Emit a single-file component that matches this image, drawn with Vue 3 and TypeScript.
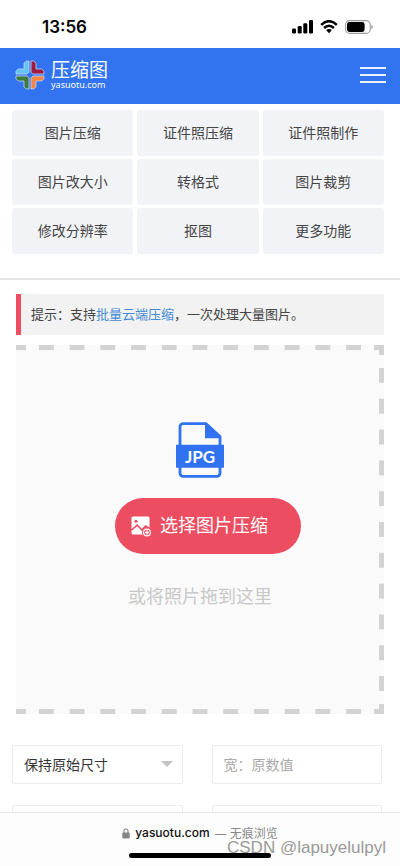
<script setup lang="ts">
import { ref } from 'vue'

const tools: string[] = [
  '图片压缩', '证件照压缩', '证件照制作',
  '图片改大小', '转格式', '图片裁剪',
  '修改分辨率', '抠图', '更多功能',
]
const size = ref('保持原始尺寸')
const width = ref('')
const format = ref('')
const height = ref('')
const picker = ref<HTMLInputElement | null>(null)
</script>

<template>
  <div class="app">
    <div class="status">
      <span class="time">13:56</span>
      <div class="indicators">
        <svg width="21" height="14" viewBox="0 0 21 14" aria-hidden="true">
          <rect x="0" y="8.5" width="4" height="5" rx="1.2" />
          <rect x="5.7" y="6" width="4" height="7.5" rx="1.2" />
          <rect x="11.3" y="3.2" width="4" height="10.3" rx="1.2" />
          <rect x="17" y="0" width="4" height="13.5" rx="1.2" />
        </svg>
        <svg width="18" height="14" viewBox="0 0 18 14" aria-hidden="true">
          <path d="M1.2 4.9Q9-2.5 16.8 4.9M4.1 8Q9 3.6 13.9 8" fill="none" stroke="#000" stroke-width="2.5" />
          <path d="M6.1 10.1Q9 7.8 11.9 10.1L9 13.2Z" />
        </svg>
        <svg width="28" height="14" viewBox="0 0 28 14" aria-hidden="true">
          <rect x=".6" y=".6" width="24.6" height="12.8" rx="4" fill="none" stroke="#9b9b9b" stroke-width="1.1" />
          <rect x="2" y="2" width="17.6" height="10" rx="2.4" />
          <path d="M26.3 4.7q1.6.7 1.6 2.3t-1.6 2.3z" fill="#9b9b9b" />
        </svg>
      </div>
    </div>

    <header class="header">
      <a class="brand" href="#">
        <svg width="30" height="30" viewBox="0 0 30 30" aria-hidden="true">
          <g stroke="#c3d6f8" stroke-width=".8" stroke-linejoin="round">
            <path d="M9 3.2L11.200 1H14v11.200L12.200 14H1v-2.800L3.200 9H9z" fill="#62c4f6" />
            <path d="M21 3.200L18.800 1H16v11.200l1.800 1.800H29v-2.800L26.800 9H21z" fill="#9e1c43" />
            <path d="M9 26.800L11.200 29H14V17.800L12.200 16H1v2.800L3.200 21H9z" fill="#3e793d" />
            <path d="M21 26.800L18.800 29H16V17.800l1.800-1.800H29v2.800L26.800 21H21z" fill="#f58443" />
          </g>
        </svg>
        <span class="names">
          <span class="title">压缩图</span>
          <span class="domain">yasuotu.com</span>
        </span>
      </a>
      <button class="menu" type="button" aria-label="菜单">
        <i></i><i></i><i></i>
      </button>
    </header>

    <main class="content">
      <nav class="tools">
        <a v-for="tool in tools" :key="tool" href="#">{{ tool }}</a>
      </nav>

      <section class="work">
        <p class="tip">提示：支持<a href="#">批量云端压缩</a>，一次处理大量图片。</p>

        <div class="drop">
          <div class="frame" aria-hidden="true">
            <i class="dash top"></i>
            <i class="dash right"></i>
            <i class="dash bottom"></i>
            <i class="corner start-top"></i>
            <i class="corner start-bottom"></i>
            <i class="corner end-top"></i>
            <i class="corner end-bottom"></i>
          </div>
          <svg class="file" width="50" height="56" viewBox="0 0 50 56" role="img" aria-label="JPG">
            <path d="M31 1.6H8.2a3.2 3.2 0 0 0-3.2 3.2v46.4a3.2 3.2 0 0 0 3.2 3.2h33.6a3.2 3.2 0 0 0 3.2-3.2V14.5z" fill="#fafafa" stroke="#3072ef" stroke-width="2.8" />
            <path d="M30 1l15.6 15.2H30z" fill="#3072ef" />
            <path d="M1 22.8h48v23H1z" fill="#3072ef" />
            <text x="25" y="40.5" text-anchor="middle" fill="#fff">JPG</text>
          </svg>
          <input ref="picker" type="file" accept="image/*" aria-label="选择图片" hidden />
          <button class="choose" type="button" @click="picker?.click()">
            <svg width="20" height="21" viewBox="0 0 20 21" aria-hidden="true">
              <path d="M2 .5h15a1.500 1.500 0 0 1 1.500 1.500v15a1.500 1.500 0 0 1-1.500 1.500H2A1.500 1.500 0 0 1 .5 17V2A1.500 1.500 0 0 1 2 .5z" fill="#fff" />
              <circle cx="5" cy="5.200" r="1.500" fill="#ec4d60" />
              <path d="M0 14.500l6.200-5.300 4.800 4.800 3.500-4 4.800 3" fill="none" stroke="#ec4d60" stroke-width="1.600" />
              <circle cx="16" cy="16.500" r="5" fill="#ec4d60" />
              <circle cx="16" cy="16.500" r="3.400" fill="none" stroke="#fff" stroke-width="1.200" />
              <path d="M16 14.500v4M14 16.500h4" stroke="#fff" stroke-width="1.400" />
            </svg>
            <span>选择图片压缩</span>
          </button>
          <p class="hint">或将照片拖到这里</p>
        </div>
      </section>

      <form class="fields" @submit.prevent>
        <div class="select">
          <select v-model="size" aria-label="尺寸">
            <option>保持原始尺寸</option>
          </select>
        </div>
        <input v-model="width" type="text" aria-label="宽" placeholder="宽：原数值" />
        <input v-model="format" type="text" aria-label="格式" />
        <input v-model="height" type="text" aria-label="高" />
      </form>
    </main>

    <footer class="browser">
      <div class="address">
        <svg width="8" height="11" viewBox="0 0 8 11" aria-hidden="true">
          <rect x=".3" y="4.500" width="7.400" height="6" rx="1" fill="#858585" />
          <path d="M2 5V3a2 2 0 0 1 4 0v2" fill="none" stroke="#858585" stroke-width="1.100" />
        </svg>
        <span class="host">yasuotu.com</span>
        <span class="mode">— 无痕浏览</span>
      </div>
      <div class="home"></div>
      <span class="mark">CSDN @lapuyelulpyl</span>
    </footer>
  </div>
</template>

<style>
body {
  margin: 0;
  background: #fff;
}
</style>

<style scoped>
* {
  box-sizing: border-box;
}
.app {
  display: flex;
  flex-direction: column;
  height: 100vh;
  color: #444;
  font-family: "Noto Sans", "Noto Sans CJK SC", sans-serif;
  font-size: 14px;
}
a {
  color: inherit;
  text-decoration: none;
}
button {
  border: 0;
  font: inherit;
  cursor: pointer;
}
.status {
  display: flex;
  flex: none;
  align-items: center;
  justify-content: space-between;
  height: 48px;
  padding: 5px 27px 0 42px;
}
.time {
  color: #000;
  font: 600 17px/20px Inter, sans-serif;
}
.indicators {
  display: flex;
  gap: 7px;
}
.header {
  display: flex;
  flex: none;
  align-items: center;
  justify-content: space-between;
  height: 56px;
  padding: 0 14px 3px 15px;
  background: #3273f0;
}
.brand {
  display: flex;
  align-items: center;
  gap: 6px;
  color: #fff;
}
.names {
  display: flex;
  flex-direction: column;
}
.title {
  font-size: 19px;
  line-height: 20px;
}
.domain {
  font: 9px/10px "Noto Sans", sans-serif;
}
.menu {
  display: flex;
  flex-direction: column;
  gap: 5px;
  padding: 0;
  background: none;
}
.menu i {
  width: 26px;
  height: 2px;
  background: #eaf2ff;
}
.content {
  flex: 1;
  min-height: 0;
  overflow-y: auto;
  scrollbar-width: none;
}
.tools {
  display: grid;
  grid-template-columns: repeat(3, 1fr);
  gap: 3px 4px;
  padding: 6px 16px 24px 12px;
  border-bottom: 2px solid #e5e5e5;
}
.tools a {
  height: 46px;
  border-radius: 3px;
  background: #f2f3f7;
  line-height: 46px;
  text-align: center;
}
.work {
  padding: 14px 16px 0;
}
.tip {
  margin: 0 0 10px;
  padding: 0 10px;
  border-left: 5px solid #ec4d60;
  background: #f2f2f2;
  font-size: 13px;
  line-height: 41px;
}
.tip a {
  color: #4389d4;
}
.drop {
  position: relative;
  display: flex;
  flex-direction: column;
  align-items: center;
  padding: 77px 0 104px;
  background: #fafafa;
}
.frame i {
  position: absolute;
}
.dash.top,
.dash.bottom {
  right: 15px;
  left: 15px;
  height: 5px;
  background: linear-gradient(90deg, transparent 25%, #d3d3d3 25% 75%, transparent 75%) 0 0 / 31px 5px round;
}
.dash.right {
  top: 15px;
  right: 0;
  bottom: 15px;
  width: 5px;
  background: linear-gradient(transparent 25%, #d3d3d3 25% 75%, transparent 75%) 0 0 / 5px 31px round;
}
.dash.top,
.start-top,
.end-top {
  top: 0;
}
.dash.bottom,
.start-bottom,
.end-bottom {
  bottom: 0;
}
.corner {
  width: 10px;
  height: 10px;
}
.start-top,
.start-bottom {
  left: 0;
}
.end-top,
.end-bottom {
  right: 0;
  border-right: 5px solid #d3d3d3;
}
.start-top,
.end-top {
  border-top: 5px solid #d3d3d3;
}
.start-bottom,
.end-bottom {
  border-bottom: 5px solid #d3d3d3;
}
.file text {
  font: 700 17px Lato, sans-serif;
}
.choose {
  display: flex;
  align-items: center;
  gap: 9px;
  height: 56px;
  margin: 20px 0 28px 16px;
  padding: 0 33px 0 16px;
  border-radius: 28px;
  background: #ec4d60;
  color: #fff;
  font-size: 18px;
  line-height: 24px;
}
.choose span {
  padding-bottom: 2px;
}
.hint {
  margin: 0;
  color: #c8c8c8;
  font-size: 18px;
  line-height: 28px;
}
.fields {
  display: grid;
  grid-template-columns: 1fr 1fr;
  gap: 21px 29px;
  padding: 31px 18px 20px 12px;
}
.fields input,
.fields select {
  width: 100%;
  height: 39px;
  margin: 0;
  padding: 0 11px;
  border: 1px solid #ececec;
  border-radius: 2px;
  background: #fff;
  color: #333;
  font: inherit;
  appearance: none;
}
.fields input::placeholder {
  color: #aaa;
}
.select {
  position: relative;
}
.select::after {
  position: absolute;
  top: 16px;
  right: 10px;
  border: 6px solid transparent;
  border-top-color: #c2c2c2;
  border-bottom: 0;
  content: "";
  pointer-events: none;
}
.browser {
  position: relative;
  display: flex;
  flex: none;
  flex-direction: column;
  align-items: center;
  padding: 10px 0 8px;
  border-top: 1px solid #e8e8e8;
  background: #fdfdfd;
}
.address {
  display: flex;
  align-items: center;
  gap: 5px;
  height: 20px;
  margin-bottom: 10px;
  color: #888;
  font-size: 12px;
}
.host {
  color: #111;
  font: 500 12px/20px Inter, sans-serif;
}
.home {
  width: 142px;
  height: 5px;
  border-radius: 3px;
  background: #000;
}
.mark {
  position: absolute;
  right: 14px;
  bottom: 8px;
  color: #999;
  font: 17px/20px "Liberation Sans", sans-serif;
}
</style>
